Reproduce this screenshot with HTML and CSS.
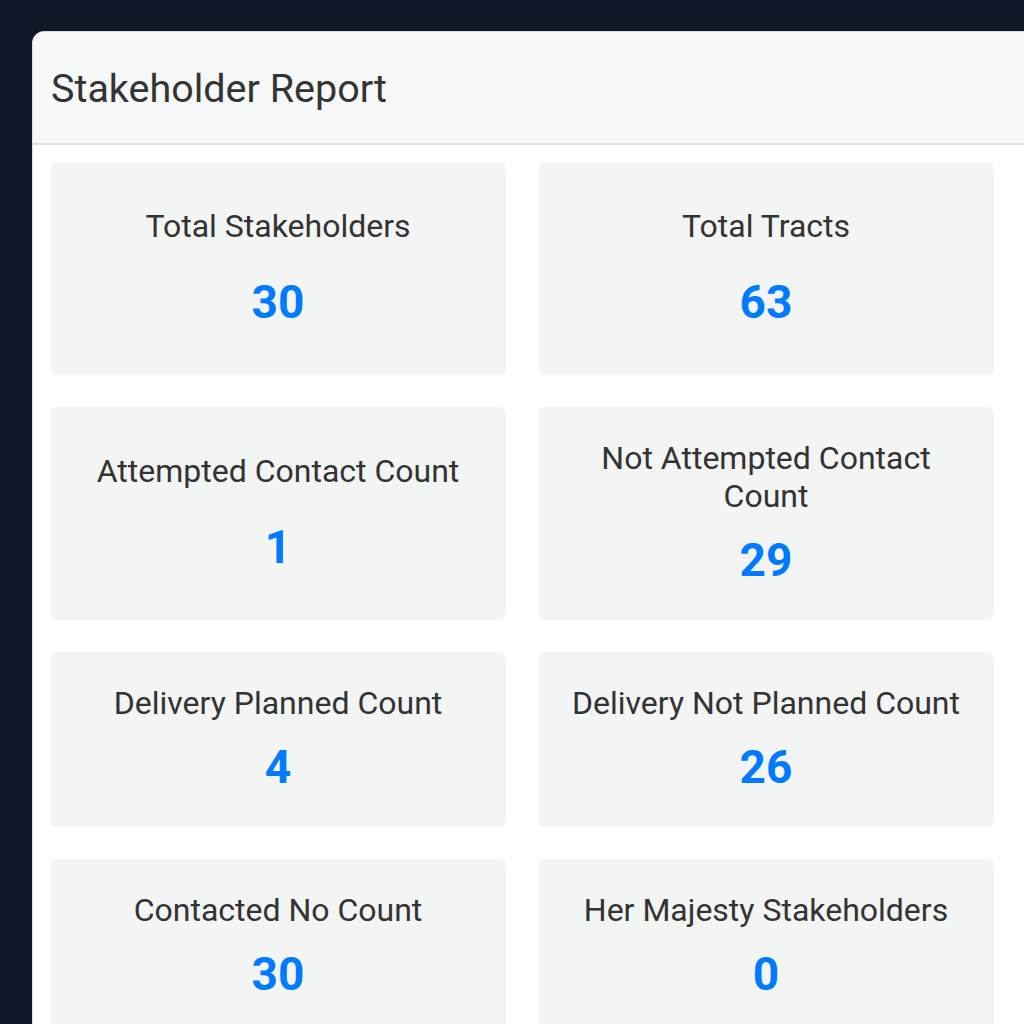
FILE: index.html
```html
<!DOCTYPE html>
<html lang="en">
<head>
<meta charset="utf-8">
<title>Stakeholder Report</title>
<link rel="stylesheet" href="styles.css">
</head>
<body>
<div class="page">
  <section class="card">
    <header class="card-header">
      <h1 class="card-title">Stakeholder Report</h1>
    </header>
    <div class="card-body">
      <div class="stats">
        <div class="stat stat-tall">
          <div class="stat-label">Total Stakeholders</div>
          <div class="stat-value">30</div>
        </div>
        <div class="stat stat-tall">
          <div class="stat-label">Total Tracts</div>
          <div class="stat-value">63</div>
        </div>
        <div class="stat">
          <div class="stat-label">Attempted Contact Count</div>
          <div class="stat-value">1</div>
        </div>
        <div class="stat">
          <div class="stat-label">Not Attempted Contact Count</div>
          <div class="stat-value">29</div>
        </div>
        <div class="stat">
          <div class="stat-label">Delivery Planned Count</div>
          <div class="stat-value">4</div>
        </div>
        <div class="stat">
          <div class="stat-label">Delivery Not Planned Count</div>
          <div class="stat-value">26</div>
        </div>
        <div class="stat">
          <div class="stat-label">Contacted No Count</div>
          <div class="stat-value">30</div>
        </div>
        <div class="stat">
          <div class="stat-label">Her Majesty Stakeholders</div>
          <div class="stat-value">0</div>
        </div>
      </div>
    </div>
  </section>
</div>
</body>
</html>
```

FILE: styles.css
```css
html, body {
  margin: 0;
  padding: 0;
  background: #111827;
  overflow: hidden;
  height: 100%;
}

body {
  font-family: Roboto, "Liberation Sans", Arial, sans-serif;
  color: #333333;
}

.page {
  padding: 31px 0 0 32px;
}

.card {
  width: 1100px;
  background: #ffffff;
  border: 1px solid #d9dcdf;
  border-radius: 12px;
  overflow: hidden;
}

.card-header {
  background: #f6f7f7;
  border-bottom: 2px solid #dfe0e0;
  height: 111px;
  display: flex;
  align-items: center;
  padding: 0 18px;
}

.card-title {
  margin: 0;
  font-size: 39.5px;
  font-weight: 400;
  color: #333333;
  margin-top: 2px;
}

.card-body {
  padding: 17px;
}

.stats {
  display: grid;
  grid-template-columns: 456px 456px;
  column-gap: 32px;
  row-gap: 32px;
}

.stat {
  background: #f3f4f4;
  border-radius: 7px;
  display: flex;
  flex-direction: column;
  justify-content: space-evenly;
  align-items: center;
  text-align: center;
  padding: 32px 30px 33px;
}

.stat-tall {
  min-height: 148px;
}

.stat-label {
  font-size: 32px;
  line-height: 38px;
  color: #333333;
}

.stat-value {
  font-size: 46px;
  line-height: 54px;
  font-weight: 700;
  color: #007bff;
  margin-top: 18px;
}
```
